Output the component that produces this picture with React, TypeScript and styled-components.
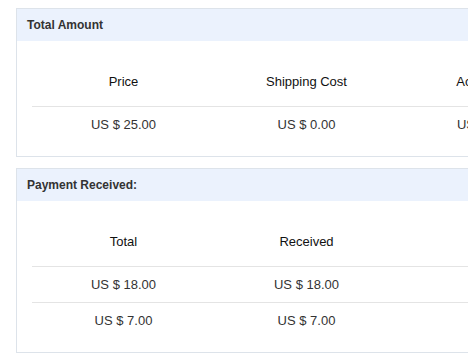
import React from 'react';
import styled, { createGlobalStyle } from 'styled-components';

const GlobalStyle = createGlobalStyle`
  html, body {
    margin: 0;
    padding: 0;
    overflow: hidden;
    background: #ffffff;
    font-family: 'Liberation Sans', Arial, sans-serif;
  }
`;

const Page = styled.div`
  padding: 8px 0 0 16px;
  display: flex;
  flex-direction: column;
  gap: 11px;
`;

const Card = styled.section`
  width: 581px;
  border: 1px solid #dde3ea;
  background: #ffffff;
`;

const CardHeader = styled.div`
  height: 32px;
  line-height: 32px;
  padding: 0 10px;
  background: #ebf2fd;
  font-size: 12px;
  font-weight: bold;
  color: #333333;
`;

const CardBody = styled.div`
  padding: 15px 15px 14px;
`;

const Table = styled.div<{ cols: number }>`
  display: grid;
  grid-template-columns: repeat(${({ cols }) => cols}, 183px);
`;

const HeadCell = styled.div`
  height: 50px;
  display: flex;
  align-items: center;
  justify-content: center;
  font-size: 13px;
  color: #111111;
  border-bottom: 1px solid #e4e4e4;
  white-space: nowrap;
`;

const Cell = styled.div<{ last?: boolean }>`
  height: 35px;
  display: flex;
  align-items: center;
  justify-content: center;
  font-size: 13px;
  color: #333333;
  border-bottom: ${({ last }) => (last ? 'none' : '1px solid #e4e4e4')};
  white-space: nowrap;
`;

type Section = {
  title: string;
  columns: string[];
  rows: string[][];
};

const sections: Section[] = [
  {
    title: 'Total Amount',
    columns: ['Price', 'Shipping Cost', 'Actual Cost'],
    rows: [['US $ 25.00', 'US $ 0.00', 'US $ 25.00']],
  },
  {
    title: 'Payment Received:',
    columns: ['Total', 'Received', ''],
    rows: [
      ['US $ 18.00', 'US $ 18.00', ''],
      ['US $ 7.00', 'US $ 7.00', ''],
    ],
  },
];

export default function App() {
  return (
    <>
      <GlobalStyle />
      <Page>
        {sections.map((s) => (
          <Card key={s.title}>
            <CardHeader>{s.title}</CardHeader>
            <CardBody>
              <Table cols={s.columns.length}>
                {s.columns.map((c, i) => (
                  <HeadCell key={'h' + i}>{c}</HeadCell>
                ))}
                {s.rows.map((row, ri) =>
                  row.map((v, ci) => (
                    <Cell key={ri + '-' + ci} last={ri === s.rows.length - 1}>
                      {v}
                    </Cell>
                  ))
                )}
              </Table>
            </CardBody>
          </Card>
        ))}
      </Page>
    </>
  );
}
